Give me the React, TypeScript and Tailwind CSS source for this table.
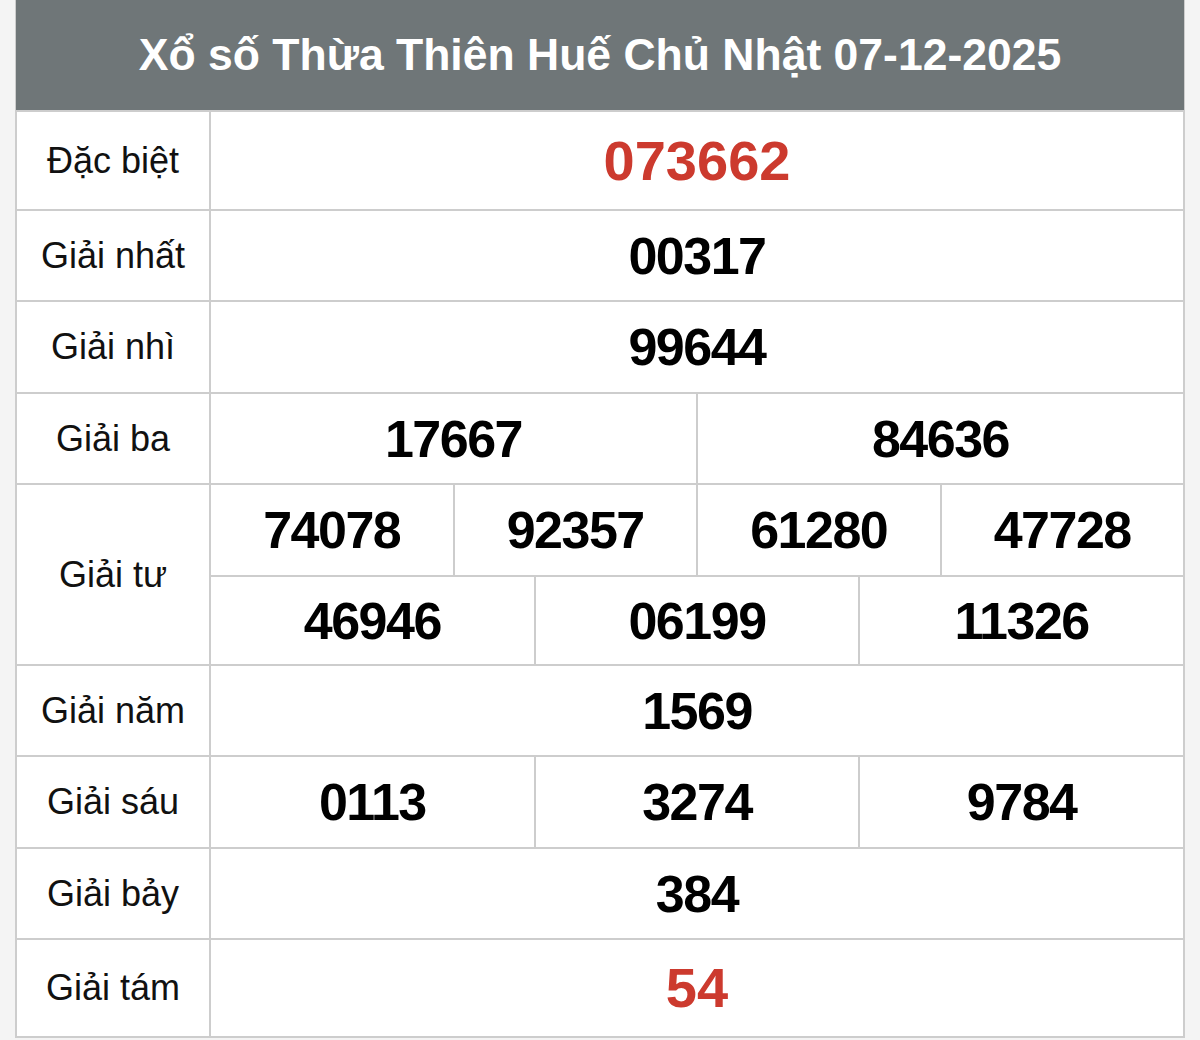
const prizes: { label: string; rows: string[][]; heights: string[]; red?: boolean }[] = [
  { label: "Đặc biệt", rows: [["073662"]], heights: ["h-[97px]"], red: true },
  { label: "Giải nhất", rows: [["00317"]], heights: ["h-[89px]"] },
  { label: "Giải nhì", rows: [["99644"]], heights: ["h-[90px]"] },
  { label: "Giải ba", rows: [["17667", "84636"]], heights: ["h-[89px]"] },
  {
    label: "Giải tư",
    rows: [
      ["74078", "92357", "61280", "47728"],
      ["46946", "06199", "11326"],
    ],
    heights: ["h-[90px]", "h-[89px]"],
  },
  { label: "Giải năm", rows: [["1569"]], heights: ["h-[89px]"] },
  { label: "Giải sáu", rows: [["0113", "3274", "9784"]], heights: ["h-[90px]"] },
  { label: "Giải bảy", rows: [["384"]], heights: ["h-[89px]"] },
  { label: "Giải tám", rows: [["54"]], heights: ["h-[96px]"], red: true },
];

export default function App() {
  return (
    <div
      className="h-[1040px] w-[1200px] overflow-hidden bg-[#f4f4f4] px-[15px]"
      style={{ fontFamily: '"Liberation Sans", Arial, sans-serif' }}
    >
      <div className="border-x-2 border-b-2 border-[#cdcdcd] bg-white">
        {/* Header */}
        <div className="-mx-[1px] flex h-[110px] items-center justify-center bg-[#6f7678]">
          <h1 className="text-[44.5px] font-bold text-white">
            Xổ số Thừa Thiên Huế Chủ Nhật 07-12-2025
          </h1>
        </div>

        {prizes.map((p) => (
          <div key={p.label} className="flex border-t-2 border-[#cdcdcd]">
            <div className="flex w-[194px] shrink-0 items-center justify-center border-r-2 border-[#cdcdcd] text-[36px] text-[#111]">
              {p.label}
            </div>
            <div className="flex flex-1 flex-col">
              {p.rows.map((row, ri) => (
                <div
                  key={ri}
                  className={`flex ${p.heights[ri]} ${ri > 0 ? "border-t-2 border-[#cdcdcd]" : ""}`}
                >
                  {row.map((num, ci) => (
                    <div
                      key={num}
                      className={`flex flex-1 items-center justify-center font-bold ${
                        ci > 0 ? "border-l-2 border-[#cdcdcd]" : ""
                      } ${
                        p.red
                          ? "text-[56px] text-[#cc3a2e]"
                          : "text-[52px] tracking-[-1.5px] text-black"
                      }`}
                    >
                      {num}
                    </div>
                  ))}
                </div>
              ))}
            </div>
          </div>
        ))}
      </div>
    </div>
  );
}
